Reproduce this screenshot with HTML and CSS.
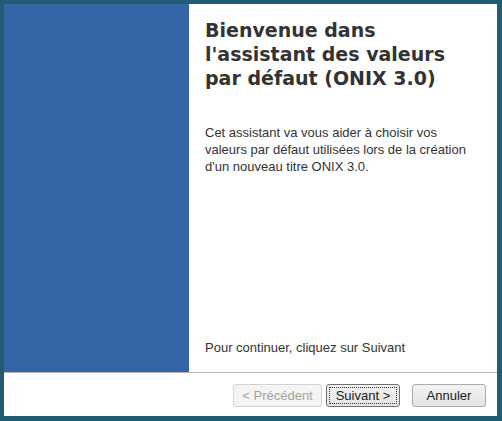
FILE: index.html
```html
<!DOCTYPE html>
<html lang="fr">
<head>
	<meta charset="utf-8">
	<title>Assistant ONIX 3.0</title>
	<link rel="stylesheet" href="styles.css">
</head>
<body>
	<div class="wizard">
		<div class="wizard-main">
			<div class="wizard-side"></div>
			<div class="wizard-page">
				<h1 class="wizard-title">Bienvenue dans l'assistant des valeurs par défaut (ONIX 3.0)</h1>
				<p class="wizard-text">Cet assistant va vous aider à choisir vos valeurs par défaut utilisées lors de la création d'un nouveau titre ONIX 3.0.</p>
				<p class="wizard-text wizard-hint">Pour continuer, cliquez sur Suivant</p>
			</div>
		</div>
		<div class="wizard-buttons">
			<button class="btn btn-prev" disabled>&lt; Précédent</button>
			<button class="btn btn-next"><span class="focus">Suivant &gt;</span></button>
			<button class="btn btn-cancel">Annuler</button>
		</div>
	</div>
</body>
</html>
```

FILE: styles.css
```css
html, body {
	margin: 0;
	padding: 0;
}

body {
	overflow: hidden;
	font-family: "Liberation Sans", Arial, sans-serif;
}

.wizard {
	width: 502px;
	height: 421px;
	box-sizing: border-box;
	border-style: solid;
	border-color: #215b74;
	border-width: 4px 5px 5px 4px;
	background: #fff;
	display: flex;
	flex-direction: column;
}

.wizard-main {
	height: 368px;
	display: flex;
	border-bottom: 1px solid #b4b4b4;
}

.wizard-side {
	width: 185px;
	background: #3466a5;
}

.wizard-page {
	flex: 1;
	padding: 14px 16px 16px 16px;
	display: flex;
	flex-direction: column;
}

.wizard-title {
	margin: 0;
	font-family: "DejaVu Sans", Verdana, sans-serif;
	font-weight: bold;
	font-size: 19px;
	line-height: 24px;
	color: #333;
	width: 270px;
}

.wizard-text {
	margin: 34px 0 0 0;
	font-size: 13px;
	line-height: 17px;
	color: #333;
	width: 272px;
}

.wizard-hint {
	margin-top: auto;
	width: auto;
}

.wizard-buttons {
	flex: 1;
	display: flex;
	justify-content: flex-end;
	align-items: flex-start;
	padding: 11px 11px 0 0;
}

.btn {
	height: 23px;
	width: 74px;
	padding: 0;
	margin: 0;
	box-sizing: border-box;
	border: 1px solid #acacac;
	border-radius: 3px;
	background: linear-gradient(#f2f2f2, #e4e4e4);
	font-family: "Liberation Sans", Arial, sans-serif;
	font-size: 13px;
	color: #222;
}

.btn-prev {
	width: 89px;
	margin-right: 4px;
	border-color: #d2d2d2;
	background: #f4f4f4;
	color: #a3a3a3;
}

.btn-next {
	margin-right: 12px;
	border-color: #707070;
	padding: 2px;
}

.btn-next .focus {
	display: block;
	height: 100%;
	box-sizing: border-box;
	border: 1px dotted #333;
	line-height: 15px;
}
```
